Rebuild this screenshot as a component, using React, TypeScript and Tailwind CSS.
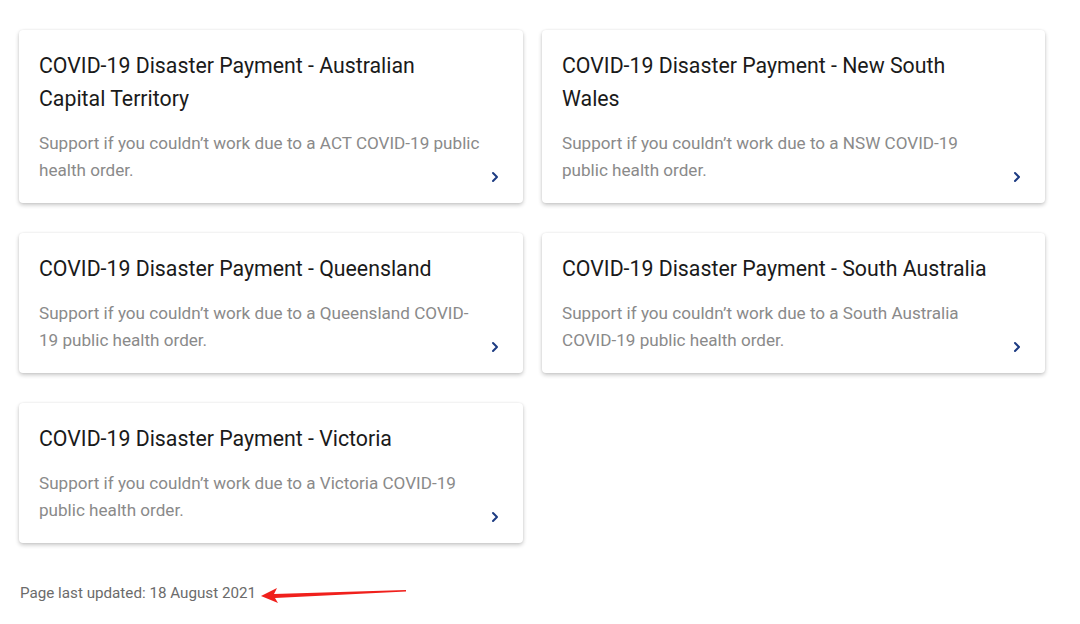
import { ChevronRight } from "lucide-react";

const cards = [
  {
    title: "COVID-19 Disaster Payment - Australian Capital Territory",
    body: "Support if you couldn’t work due to a ACT COVID-19 public health order.",
  },
  {
    title: "COVID-19 Disaster Payment - New South Wales",
    body: "Support if you couldn’t work due to a NSW COVID-19 public health order.",
  },
  {
    title: "COVID-19 Disaster Payment - Queensland",
    body: "Support if you couldn’t work due to a Queensland COVID-19 public health order.",
  },
  {
    title: "COVID-19 Disaster Payment - South Australia",
    body: "Support if you couldn’t work due to a South Australia COVID-19 public health order.",
  },
  {
    title: "COVID-19 Disaster Payment - Victoria",
    body: "Support if you couldn’t work due to a Victoria COVID-19 public health order.",
  },
];

function Card({ title, body }: { title: string; body: string }) {
  return (
    <a className="relative block rounded-[4px] bg-white pl-5 pr-[38px] pt-[19px] pb-[19px] shadow-[0_2px_4px_rgba(0,0,0,0.22),0_0_2px_rgba(0,0,0,0.08)]">
      <h3 className="text-[21.3px] leading-[33px] text-[#1a1a1a]">{title}</h3>
      <p className="mt-[15px] text-[17.1px] leading-[27px] text-[#8a8a8a]">{body}</p>
      <ChevronRight className="absolute bottom-[18px] right-[20px] h-[16px] w-[16px] text-[#1c3b82]" strokeWidth={3} />
    </a>
  );
}

export default function App() {
  return (
    <div className="min-h-[624px] w-[1080px] bg-white pl-[19px] pt-[30px]" style={{ fontFamily: "Roboto, 'Liberation Sans', sans-serif" }}>
      <div className="grid grid-cols-[504px_503px] gap-x-[19px] gap-y-[30px]">
        {cards.map((c) => (
          <Card key={c.title} title={c.title} body={c.body} />
        ))}
      </div>

      <div className="mt-[40px] flex items-center pl-px">
        <span className="text-[15.2px] leading-5 text-[#6b6b6b]">Page last updated: 18 August 2021</span>
        <svg className="ml-[5px] mt-[3px]" width="146" height="16" viewBox="0 0 146 16">
          <polygon points="0,9 16,1 13,7 145,3 145,4.5 14,11 17,16" fill="#f0201c" />
        </svg>
      </div>
    </div>
  );
}
